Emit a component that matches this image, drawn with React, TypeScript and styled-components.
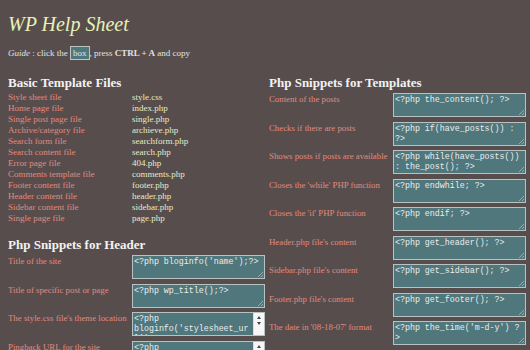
import React from 'react'
import styled, { createGlobalStyle } from 'styled-components'

const GlobalStyle = createGlobalStyle`
  html, body {
    margin: 0;
    background: #574d4d;
  }
  body {
    font-family: 'Liberation Serif', 'Times New Roman', serif;
    color: #e6e6e6;
  }
`

const Page = styled.div`
  width: 530px;
  height: 350px;
  overflow: hidden;
  padding: 0 4px 0 8px;
  box-sizing: border-box;
`

const Title = styled.h1`
  margin: 0;
  padding-top: 13px;
  font-size: 20px;
  line-height: 23px;
  font-weight: normal;
  font-style: italic;
  color: #e9f2b8;
`

const Guide = styled.p`
  margin: 10px 0 0;
  font-size: 9px;
  line-height: 12px;
  color: #e2e2e2;

  em {
    font-style: italic;
  }
  b {
    font-weight: bold;
  }
`

const BoxWord = styled.span`
  display: inline-block;
  background: #4f787d;
  border: 1px solid #b9c4c4;
  padding: 1px 2px;
  line-height: 10px;
`

const Columns = styled.div`
  display: grid;
  grid-template-columns: 257px 257px;
  column-gap: 4px;
  margin-top: 15px;
`

const Column = styled.div`
  display: flex;
  flex-direction: column;
`

const Heading = styled.h2<{ $gap?: number }>`
  margin: ${(p) => p.$gap ?? 0}px 0 0;
  font-size: 13px;
  line-height: 15px;
  font-weight: bold;
  color: #f2f2f2;
`

const FileList = styled.div`
  display: grid;
  grid-template-columns: 124px 1fr;
  grid-auto-rows: 11px;
  margin-top: 2px;
  font-size: 9px;
  line-height: 11px;
`

const FileLabel = styled.span`
  color: #e08a7e;
`

const FileName = styled.span`
  color: #e4ebc6;
`

const Snippets = styled.div`
  display: flex;
  flex-direction: column;
  gap: 4.5px;
  margin-top: 3px;
`

const SnippetRow = styled.div`
  display: grid;
  grid-template-columns: 124px 133px;
`

const SnippetLabel = styled.span`
  padding-top: 1px;
  font-size: 8.8px;
  line-height: 11px;
  color: #e08a7e;
`

const CodeBox = styled.div`
  position: relative;
  width: 133px;
  height: 24px;
`

const Code = styled.textarea<{ $scroll?: boolean }>`
  display: block;
  box-sizing: border-box;
  width: 133px;
  height: 24px;
  margin: 0;
  padding: 1px ${(p) => (p.$scroll ? 12 : 1)}px 1px 1px;
  border: 1px solid #b8c2c2;
  background: #4f777c;
  color: #ececec;
  font-family: 'Liberation Mono', 'Courier New', monospace;
  font-size: 8.3px;
  line-height: 10px;
  resize: none;
  overflow: hidden;
  outline: none;
`

// drawn over the textarea's right edge, headless chrome hides real scrollbars
const ScrollBar = styled.div`
  position: absolute;
  top: 1px;
  right: 1px;
  bottom: 1px;
  width: 10px;
  background: #f7f7f7;
  border-left: 1px solid #dcdcdc;

  &::before,
  &::after {
    content: '';
    position: absolute;
    left: 3px;
    border-left: 2px solid transparent;
    border-right: 2px solid transparent;
  }
  &::before {
    top: 3px;
    border-bottom: 3px solid #444;
  }
  &::after {
    top: 9px;
    border-top: 3px solid #444;
  }
`

const ResizeGrip = styled.div`
  position: absolute;
  right: 2px;
  bottom: 2px;
  width: 5px;
  height: 5px;
  background: linear-gradient(
    135deg,
    transparent 45%,
    #9aa 45%,
    #9aa 55%,
    transparent 55%,
    transparent 75%,
    #9aa 75%,
    #9aa 85%,
    transparent 85%
  );
`

const files: [string, string][] = [
  ['Style sheet file', 'style.css'],
  ['Home page file', 'index.php'],
  ['Single post page file', 'single.php'],
  ['Archive/category file', 'archieve.php'],
  ['Search form file', 'searchform.php'],
  ['Search content file', 'search.php'],
  ['Error page file', '404.php'],
  ['Comments template file', 'comments.php'],
  ['Footer content file', 'footer.php'],
  ['Header content file', 'header.php'],
  ['Sidebar content file', 'sidebar.php'],
  ['Single page file', 'page.php'],
]

type Snippet = { label: string; code: string; scroll?: boolean }

const headerSnippets: Snippet[] = [
  { label: 'Title of the site', code: "<?php bloginfo('name');?>" },
  { label: 'Title of specific post or page', code: '<?php wp_title();?>' },
  { label: "The style.css file's theme location", code: "<?php bloginfo('stylesheet_url'); ?>", scroll: true },
  { label: 'Pingback URL for the site', code: "<?php bloginfo('pingback_url'); ?>", scroll: true },
]

const templateSnippets: Snippet[] = [
  { label: 'Content of the posts', code: '<?php the_content(); ?>' },
  { label: 'Checks if there are posts', code: '<?php if(have_posts()) : ?>' },
  { label: 'Shows posts if posts are available', code: '<?php while(have_posts()) : the_post(); ?>' },
  { label: "Closes the 'while' PHP function", code: '<?php endwhile; ?>' },
  { label: "Closes the 'if' PHP function", code: '<?php endif; ?>' },
  { label: "Header.php file's content", code: '<?php get_header(); ?>' },
  { label: "Sidebar.php file's content", code: '<?php get_sidebar(); ?>' },
  { label: "Footer.php file's content", code: '<?php get_footer(); ?>' },
  { label: "The date in '08-18-07' format", code: "<?php the_time('m-d-y') ?>" },
  { label: 'Link for the comments on the post', code: '<?php comments_popup_link(); ?>', scroll: true },
]

function SnippetList({ items }: { items: Snippet[] }) {
  return (
    <Snippets>
      {items.map((s) => (
        <SnippetRow key={s.label}>
          <SnippetLabel>{s.label}</SnippetLabel>
          <CodeBox>
            <Code defaultValue={s.code} spellCheck={false} readOnly $scroll={s.scroll} />
            {s.scroll ? <ScrollBar /> : <ResizeGrip />}
          </CodeBox>
        </SnippetRow>
      ))}
    </Snippets>
  )
}

export default function App() {
  return (
    <Page>
      <GlobalStyle />
      <Title>WP Help Sheet</Title>
      <Guide>
        <em>Guide</em> : click the <BoxWord>box</BoxWord>, press <b>CTRL + A</b> and copy
      </Guide>
      <Columns>
        <Column>
          <Heading>Basic Template Files</Heading>
          <FileList>
            {files.map(([label, file]) => (
              <React.Fragment key={file}>
                <FileLabel>{label}</FileLabel>
                <FileName>{file}</FileName>
              </React.Fragment>
            ))}
          </FileList>
          <Heading $gap={13}>Php Snippets for Header</Heading>
          <SnippetList items={headerSnippets} />
        </Column>
        <Column>
          <Heading>Php Snippets for Templates</Heading>
          <SnippetList items={templateSnippets} />
        </Column>
      </Columns>
    </Page>
  )
}
